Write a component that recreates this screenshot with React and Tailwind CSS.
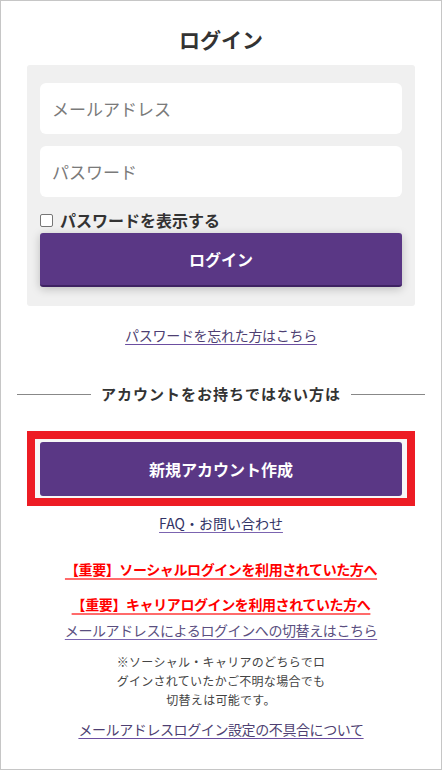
export default function App() {
  const jp = { fontFamily: '"Noto Sans CJK JP", "Noto Sans", sans-serif' };
  return (
    <div
      style={jp}
      className="w-[442px] h-[770px] border border-[#c6c6c6] bg-white text-[#333] flex flex-col items-stretch"
    >
      <h1 className="pt-[25px] text-center text-[21px] leading-[26px] font-bold text-[#333]">ログイン</h1>

      {/* login form panel */}
      <div className="mt-[13px] mx-[26px] rounded-[3px] bg-[#f0f0f0] px-[13px] pt-[18px] pb-[19px] flex flex-col">
        <input
          placeholder="メールアドレス"
          className="h-[51px] rounded-[6px] bg-white px-[12px] text-[17px] placeholder:text-[#7a7a7a] outline-none"
        />
        <input
          placeholder="パスワード"
          type="password"
          className="mt-[12px] h-[51px] rounded-[6px] bg-white px-[12px] text-[17px] placeholder:text-[#7a7a7a] outline-none"
        />
        <label className="mt-[10px] h-[26px] flex items-center gap-[7px] text-[16px] font-bold text-[#333]">
          <span className="w-[13px] h-[13px] rounded-[2px] border border-[#767676] bg-white" />
          パスワードを表示する
        </label>
        <button className="h-[54px] rounded-[3px] bg-[#5a3785] border-b-2 border-[#3e2262] text-white text-[16px] font-bold shadow-[0_2px_10px_rgba(0,0,0,0.22)]">
          ログイン
        </button>
      </div>

      <div className="mt-[19px] text-center text-[14px] leading-[20px] tracking-[-0.3px]">
        <a className="text-[#4e3f72] underline decoration-[#6b4ea0] underline-offset-[3px]">パスワードを忘れた方はこちら</a>
      </div>

      {/* divider */}
      <div className="mt-[39px] px-[16px] flex items-center gap-[10px]">
        <div className="flex-1 h-px bg-[#888]" />
        <span className="text-[15px] leading-[20px] font-bold tracking-[1px] text-[#333]">アカウントをお持ちではない方は</span>
        <div className="flex-1 h-px bg-[#888]" />
      </div>

      <div className="mt-[27px] mx-[26px] h-[75px] border-[8px] border-[#ed1c24] bg-[#f7f7f7] pl-[5px] pr-[5px] pt-[3px] pb-[2px] flex">
        <button className="flex-1 rounded-[3px] bg-[#5a3785] text-white text-[16px] font-bold">新規アカウント作成</button>
      </div>

      <div className="mt-[7px] text-center text-[14px] leading-[20px]">
        <a className="text-[#333366] underline decoration-[#7b64b0] underline-offset-[3px]">FAQ・お問い合わせ</a>
      </div>

      <div className="mt-[26px] text-center text-[14px] leading-[20px] font-bold tracking-[-0.4px]">
        <a className="text-[#ff0000] underline decoration-[#ff6b6b] decoration-2 underline-offset-[3px]">【重要】ソーシャルログインを利用されていた方へ</a>
      </div>
      <div className="mt-[15px] text-center text-[14px] leading-[20px] font-bold tracking-[-0.4px]">
        <a className="text-[#ff0000] underline decoration-[#ff6b6b] decoration-2 underline-offset-[3px]">【重要】キャリアログインを利用されていた方へ</a>
      </div>
      <div className="mt-[6px] text-center text-[14px] leading-[20px] tracking-[-0.4px]">
        <a className="text-[#5a4f80] underline decoration-[#7b64b0] underline-offset-[3px]">メールアドレスによるログインへの切替えはこちら</a>
      </div>

      <p className="mt-[12px] text-center text-[12px] leading-[19px] text-[#444] tracking-[0.3px]">
        ※ソーシャル・キャリアのどちらでロ
        <br />
        グインされていたかご不明な場合でも
        <br />
        切替えは可能です。
      </p>

      <div className="mt-[10px] text-center text-[14px] leading-[20px] tracking-[-0.4px]">
        <a className="text-[#4e3f72] underline decoration-[#6b4ea0] underline-offset-[3px]">メールアドレスログイン設定の不具合について</a>
      </div>
    </div>
  );
}
